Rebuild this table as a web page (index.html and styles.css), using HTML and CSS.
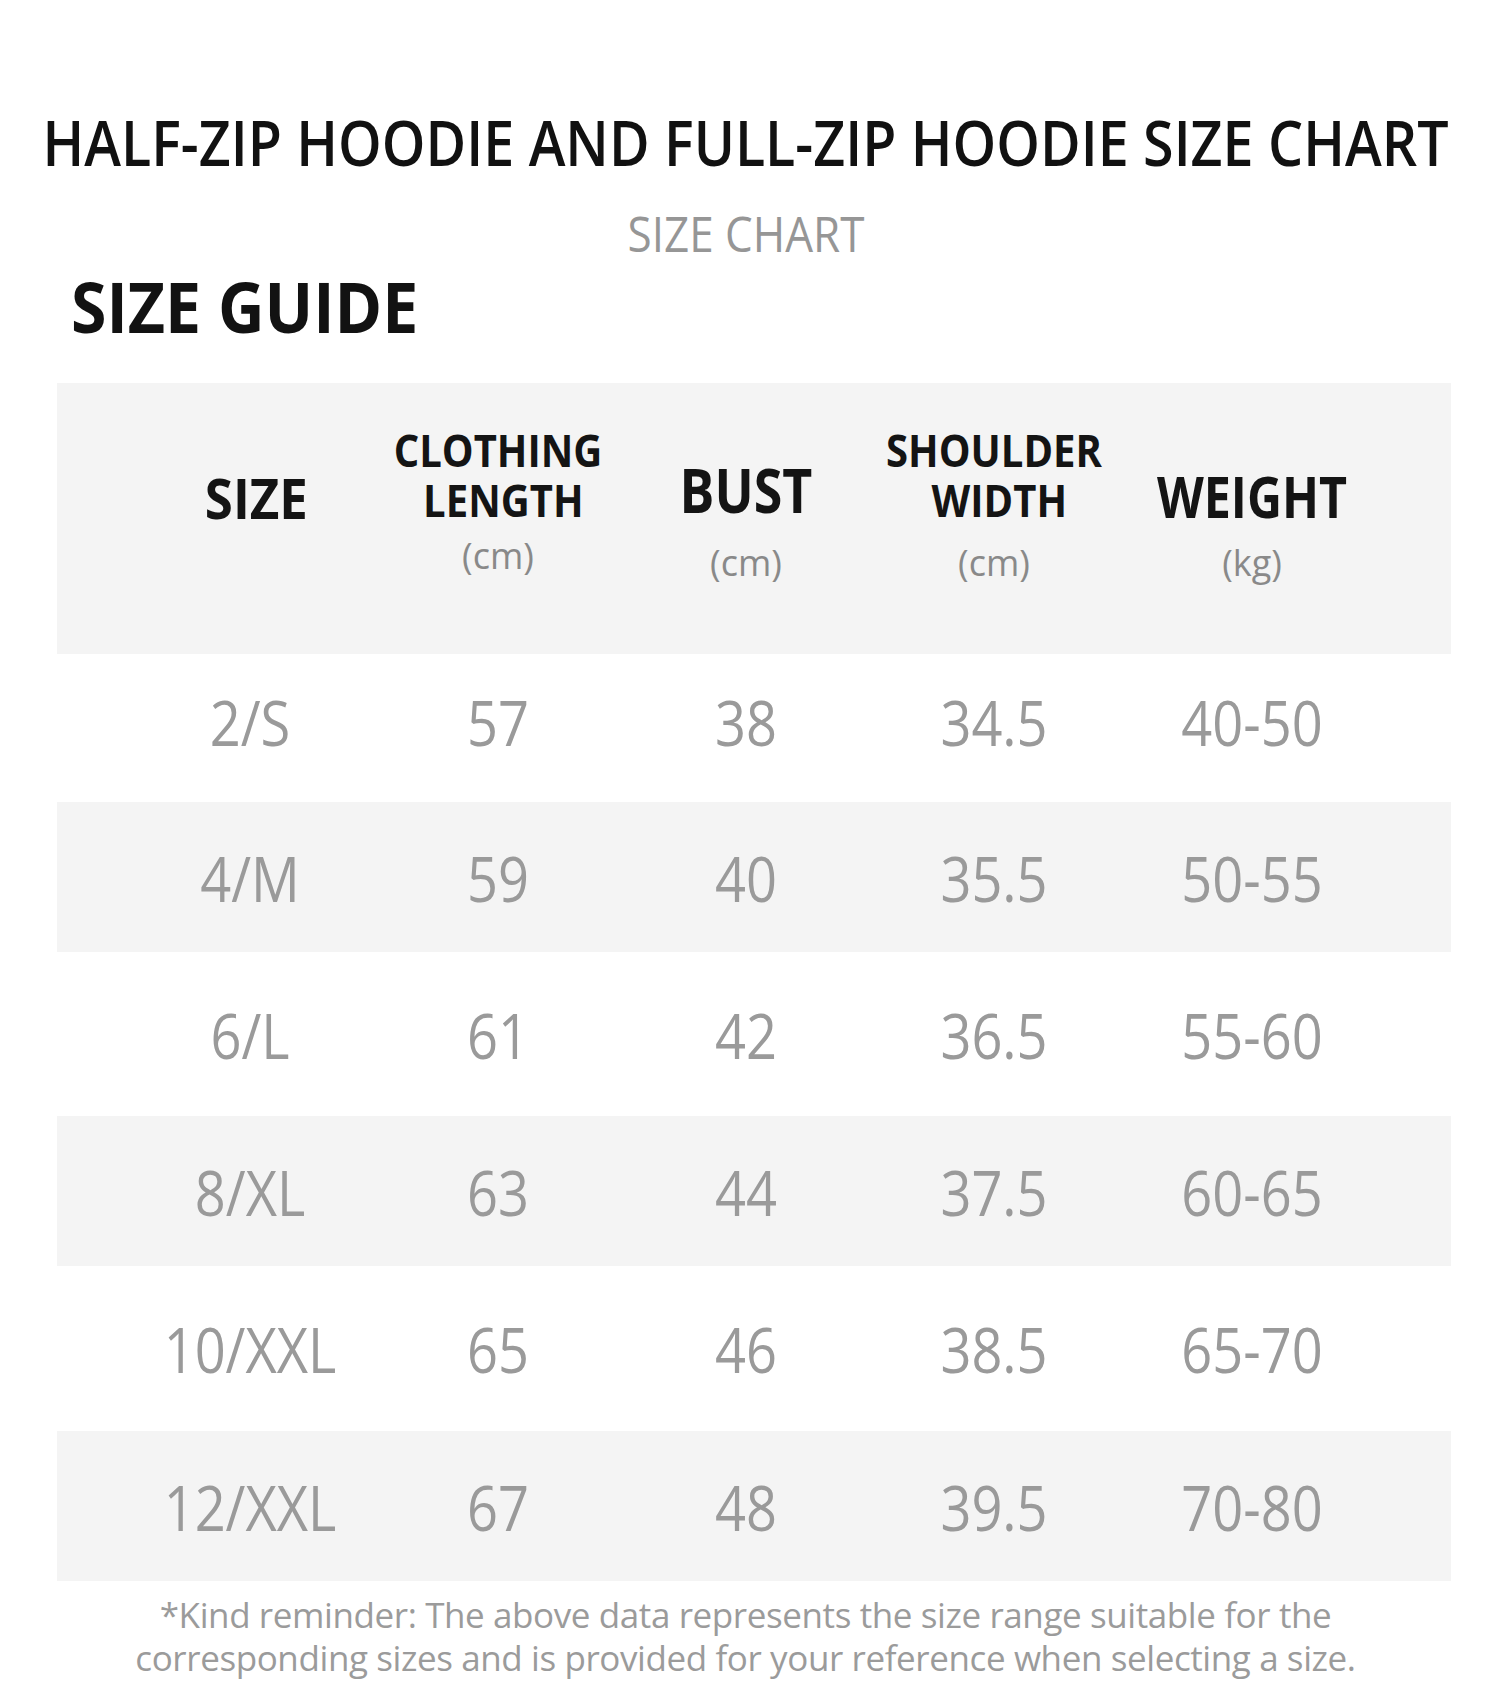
FILE: index.html
```html
<!DOCTYPE html>
<html lang="en">
<head>
<meta charset="utf-8">
<title>Half-Zip Hoodie and Full-Zip Hoodie Size Chart</title>
<link rel="stylesheet" href="styles.css">
</head>
<body>
<div class="page">
  <h1 class="title">HALF-ZIP HOODIE AND FULL-ZIP HOODIE SIZE CHART</h1>
  <p class="subtitle">SIZE CHART</p>
  <h2 class="guide">SIZE GUIDE</h2>
  <div class="chart">
    <div class="chart-head">
      <div class="head-name head-name--size">SIZE</div>
      <div class="head-name head-name--two">CLOTHING<br><span class="shift">LENGTH</span></div>
      <div class="head-name head-name--bust">BUST</div>
      <div class="head-name head-name--two">SHOULDER<br><span class="shift">WIDTH</span></div>
      <div class="head-name head-name--weight">WEIGHT</div>
      <div class="head-unit"></div>
      <div class="head-unit head-unit--up">(cm)</div>
      <div class="head-unit">(cm)</div>
      <div class="head-unit">(cm)</div>
      <div class="head-unit">(kg)</div>
    </div>
    <div class="chart-row">
      <div class="cell">2/S</div><div class="cell">57</div><div class="cell">38</div><div class="cell">34.5</div><div class="cell">40-50</div>
    </div>
    <div class="chart-row">
      <div class="cell">4/M</div><div class="cell">59</div><div class="cell">40</div><div class="cell">35.5</div><div class="cell">50-55</div>
    </div>
    <div class="chart-row">
      <div class="cell">6/L</div><div class="cell">61</div><div class="cell">42</div><div class="cell">36.5</div><div class="cell">55-60</div>
    </div>
    <div class="chart-row">
      <div class="cell">8/XL</div><div class="cell">63</div><div class="cell">44</div><div class="cell">37.5</div><div class="cell">60-65</div>
    </div>
    <div class="chart-row">
      <div class="cell">10/XXL</div><div class="cell">65</div><div class="cell">46</div><div class="cell">38.5</div><div class="cell">65-70</div>
    </div>
    <div class="chart-row">
      <div class="cell">12/XXL</div><div class="cell">67</div><div class="cell">48</div><div class="cell">39.5</div><div class="cell">70-80</div>
    </div>
  </div>
  <p class="note">*Kind reminder: The above data represents the size range suitable for the<br>corresponding sizes and is provided for your reference when selecting a size.</p>
</div>
</body>
</html>
```
FILE: styles.css
```css
* {
  box-sizing: border-box;
}

html, body {
  margin: 0;
  padding: 0;
  background: #ffffff;
}

.page {
  width: 1500px;
  min-height: 1699px;
  padding-top: 110px;
  font-family: "Open Sans", "Liberation Sans", sans-serif;
  color: #151515;
  overflow: hidden;
}

.title {
  display: flex;
  justify-content: center;
  margin: 0;
  padding-right: 10px;
  font-size: 63px;
  line-height: 63px;
  font-weight: 600;
  color: #111111;
  white-space: nowrap;
  transform: scaleX(0.882);
}

.subtitle {
  margin: 35px 0 0;
  padding-right: 9px;
  text-align: center;
  font-size: 50px;
  line-height: 50px;
  font-weight: 400;
  color: #969696;
  transform: scaleX(0.88);
}

.guide {
  margin: 13px 0 0 71px;
  font-size: 70px;
  line-height: 70px;
  font-weight: 700;
  color: #121212;
  transform: scaleX(0.92);
  transform-origin: left center;
}

.chart {
  margin: 42px 49px 0 57px;
}

.chart > :nth-child(odd) {
  background: #f4f4f4;
}

.chart-head,
.chart-row {
  display: grid;
  grid-template-columns: 248px 248px 248px 248px 268px;
  padding: 0 65px 0 69px;
}

.chart-head {
  grid-template-rows: 142px 129px;
}

.head-name {
  align-self: end;
  text-align: center;
  font-weight: 700;
  color: #141414;
  font-size: 56px;
  line-height: 56px;
  transform: scaleX(0.885);
}

.head-name--size {
  padding-left: 14px;
  transform: scaleX(0.91);
}

.head-name--two {
  font-size: 45px;
  line-height: 50px;
  transform: scaleX(0.89);
}

.shift {
  padding-left: 12px;
}

.head-name--bust {
  font-size: 60px;
  line-height: 60px;
  margin-bottom: 5px;
  transform: scaleX(0.865);
}

.head-name--weight {
  font-size: 57px;
  line-height: 57px;
  transform: scaleX(0.85);
}

.head-unit {
  align-self: start;
  margin-top: 20px;
  text-align: center;
  font-size: 36px;
  line-height: 36px;
  color: #898989;
}

.head-unit--up {
  margin-top: 13px;
}

.chart-row {
  align-items: center;
}

.chart-row:nth-child(2) { height: 148px; padding-bottom: 14px; }
.chart-row:nth-child(3) { height: 150px; }
.chart-row:nth-child(4) { height: 164px; }
.chart-row:nth-child(5) { height: 150px; }
.chart-row:nth-child(6) { height: 165px; }
.chart-row:nth-child(7) { height: 150px; }

.cell {
  text-align: center;
  font-size: 63px;
  line-height: 63px;
  color: #9a9a9a;
  transform: scaleX(0.86);
}

.note {
  margin: 12px 0 0;
  padding-right: 9px;
  text-align: center;
  font-size: 35px;
  line-height: 43px;
  letter-spacing: -0.4px;
  color: #9b9b9b;
}
```
